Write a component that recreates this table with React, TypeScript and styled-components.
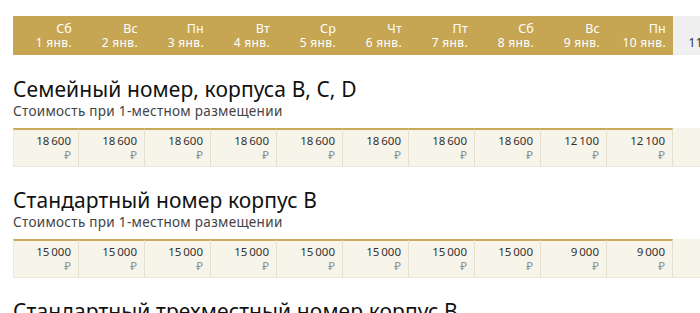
import React from "react";
import styled, { createGlobalStyle } from "styled-components";

const GlobalStyle = createGlobalStyle`
  html, body {
    margin: 0;
    padding: 0;
    background: #ffffff;
    overflow: hidden;
  }
  body {
    font-family: "Noto Sans", "Open Sans", sans-serif;
    color: #1c1c1c;
  }
`;

const Page = styled.div`
  width: 700px;
  height: 313px;
  overflow: hidden;
  padding: 16px 0 0 13px;
  box-sizing: border-box;
`;

const Row = styled.div`
  display: flex;
  width: max-content;
`;

const HeadRow = styled(Row)`
  margin-bottom: 1px;
`;

const HeadCell = styled.div<{ $muted?: boolean }>`
  width: 66px;
  height: 39px;
  box-sizing: border-box;
  padding: 5px 7px 0 0;
  flex: none;
  display: flex;
  flex-direction: column;
  align-items: flex-end;
  background: ${(p) => (p.$muted ? "#efefef" : "#c6a653")};
  color: ${(p) => (p.$muted ? "#333333" : "#ffffff")};
  font-size: 12px;
  line-height: 14px;
  letter-spacing: 0.35px;
`;

const DayName = styled.span`
  font-size: 12.5px;
  line-height: 15px;
  letter-spacing: 0.2px;
`;

const Section = styled.section`
  padding-top: 20px;
`;

const Title = styled.h2`
  margin: 0;
  font-size: 21px;
  font-weight: 400;
  line-height: 26px;
  letter-spacing: 0.1px;
  color: #111111;
`;

const Subtitle = styled.div`
  font-size: 13.5px;
  line-height: 18px;
  letter-spacing: 0.3px;
  color: #444444;
`;

const PriceRow = styled(Row)`
  margin-top: 8px;
`;

const PriceCell = styled.div<{ $empty?: boolean }>`
  width: 66px;
  height: 39px;
  box-sizing: border-box;
  flex: none;
  display: flex;
  flex-direction: column;
  align-items: flex-end;
  padding: 4px 7px 0 0;
  background: #f7f4ea;
  border-top: 2px solid ${(p) => (p.$empty ? "#f7f4ea" : "#c9a95a")};
  border-right: 1px solid #e4dfcf;
  border-bottom: 1px solid #ece8dc;
  font-size: 11.5px;
  line-height: 14px;
  color: #333333;
  &:first-child {
    border-left: 1px solid #ece8dc;
  }
`;

const Currency = styled.span`
  color: #8a8a8a;
  font-size: 11.5px;
`;

const days = [
  ["Сб", "1 янв."],
  ["Вс", "2 янв."],
  ["Пн", "3 янв."],
  ["Вт", "4 янв."],
  ["Ср", "5 янв."],
  ["Чт", "6 янв."],
  ["Пт", "7 янв."],
  ["Сб", "8 янв."],
  ["Вс", "9 янв."],
  ["Пн", "10 янв."],
];

const rooms = [
  {
    title: "Семейный номер, корпуса B, C, D",
    prices: ["18 600", "18 600", "18 600", "18 600", "18 600", "18 600", "18 600", "18 600", "12 100", "12 100"],
  },
  {
    title: "Стандартный номер корпус B",
    prices: ["15 000", "15 000", "15 000", "15 000", "15 000", "15 000", "15 000", "15 000", "9 000", "9 000"],
  },
  {
    title: "Стандартный трехместный номер корпус B",
    prices: ["15 000", "15 000", "15 000", "15 000", "15 000", "15 000", "15 000", "15 000", "9 000", "9 000"],
  },
];

export default function App() {
  return (
    <Page>
      <GlobalStyle />
      <HeadRow>
        {days.map(([d, date], i) => (
          <HeadCell key={i}>
            <DayName>{d}</DayName>
            <span>{date}</span>
          </HeadCell>
        ))}
        <HeadCell $muted>
          <DayName>Вт</DayName>
          <span>11 янв.</span>
        </HeadCell>
      </HeadRow>
      {rooms.map((room) => (
        <Section key={room.title}>
          <Title>{room.title}</Title>
          <Subtitle>Стоимость при 1-местном размещении</Subtitle>
          <PriceRow>
            {room.prices.map((p, i) => (
              <PriceCell key={i}>
                <span>{p.replace(" ", "\u2009")}</span>
                <Currency>₽</Currency>
              </PriceCell>
            ))}
            <PriceCell $empty />
          </PriceRow>
        </Section>
      ))}
    </Page>
  );
}
